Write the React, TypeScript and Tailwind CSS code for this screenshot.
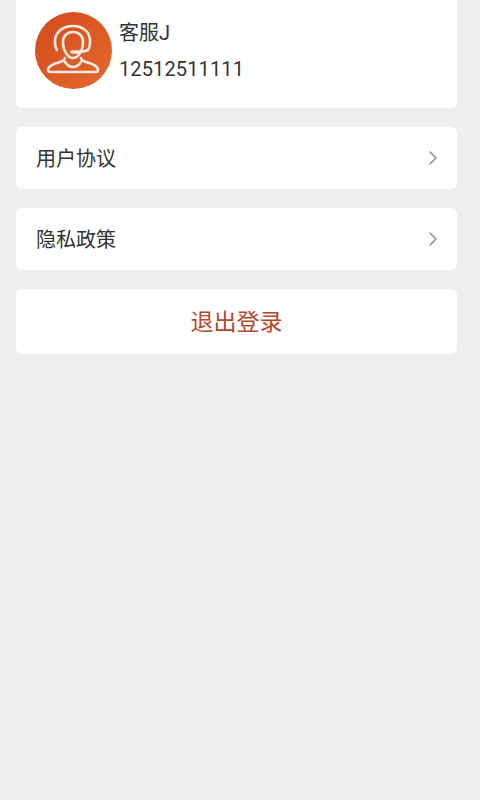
import { ChevronRight } from 'lucide-react';

const font = 'font-["Roboto","Noto_Sans_CJK_SC",sans-serif]';

const Avatar = () => (
  <div className="w-[77px] h-[77px] rounded-full bg-gradient-to-br from-[#d2491c] to-[#e56a2d] shrink-0">
    <svg viewBox="0 0 77 77" className="w-full h-full" fill="none" stroke="#f8ebe2" strokeWidth="2.6" strokeLinecap="round" strokeLinejoin="round">
      {/* head */}
      <path d="M28 30c0-6 4-10 10-10s10 4 10 10c0 9-5 16-10 16s-10-7-10-16z" />
      {/* headset band */}
      <path d="M22 38c-2-3-2-6-2-9 0-9 8-15 18-15s17 6 17 15c0 3 0 6-2 9" />
      <path d="M53 38c-2 1-5 2-9 2" />
      {/* mic */}
      <path d="M37 40h7" strokeWidth="3.6" />
      {/* shoulders */}
      <path d="M30 46c0 2-2 3-5 4-7 2-12 4-12 8 0 2 1 2 3 2h44c2 0 3 0 3-2 0-4-5-6-12-8-3-1-5-2-5-4" />
      <path d="M30 50c2 3 5 5 8 5s6-2 8-5" />
    </svg>
  </div>
);

const LinkRow = ({ label }: { label: string }) => (
  <div className="h-[62px] bg-white rounded-md flex items-center justify-between pl-5 pr-[12px]">
    <span className="text-[20px] leading-[26px] pt-[2px] text-[#333333]">{label}</span>
    <ChevronRight className="w-[24px] h-[24px] text-[#8c8c8c]" strokeWidth={1.5} />
  </div>
);

export default function App() {
  return (
    <div className={`min-h-[800px] bg-[#eeeeef] pl-4 pr-[23px] ${font}`}>
      <div className="h-[108px] bg-white rounded-b-md flex pl-[19px] pt-[12px] gap-[7px]">
        <Avatar />
        <div className="flex flex-col gap-[10px] pt-[8px] text-[#333333]">
          <span className="text-[20px] leading-[26px]">客服J</span>
          <span className="text-[20px] leading-[26px] tracking-[0.13px]">12512511111</span>
        </div>
      </div>
      <div className="mt-[19px] flex flex-col gap-[19px]">
        <LinkRow label="用户协议" />
        <LinkRow label="隐私政策" />
        <div className="h-[65px] bg-white rounded-md flex items-center justify-center">
          <span className="text-[23px] leading-[30px] pt-[2px] text-[#b5482b]">退出登录</span>
        </div>
      </div>
    </div>
  );
}
